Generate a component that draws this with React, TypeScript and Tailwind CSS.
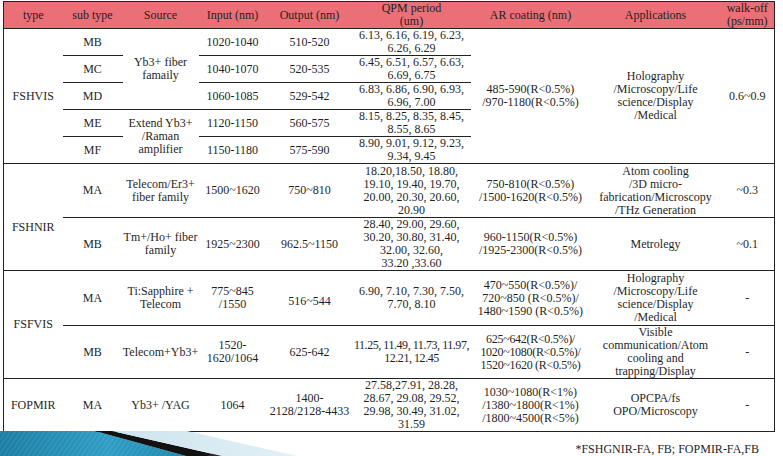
import React from "react";

// Crystal specification table (slide-style), with the decorative swoosh bottom-left.

type Cell = {
	text: React.ReactNode;
	rowSpan?: number;
	className?: string;
};

type Row = { h: string; cells: Cell[] };

const br = (...lines: string[]) =>
	lines.map((l, i) => (
		<React.Fragment key={i}>
			{i > 0 && <br />}
			{l}
		</React.Fragment>
	));

const holography = br("Holography", "/Microscopy/Life", "science/Display", "/Medical");

const rows: Row[] = [
	{
		h: "h-[26px]",
		cells: [
			{ text: "FSHVIS", rowSpan: 5 },
			{ text: "MB" },
			{ text: br("Yb3+ fiber", "famaily"), rowSpan: 3 },
			{ text: "1020-1040" },
			{ text: "510-520" },
			{ text: br("6.13, 6.16, 6.19, 6.23,", "6.26, 6.29") },
			{ text: br("485-590(R<0.5%)", "/970-1180(R<0.5%)"), rowSpan: 5 },
			{ text: holography, rowSpan: 5 },
			{ text: "0.6~0.9", rowSpan: 5 },
		],
	},
	{
		h: "h-[27px]",
		cells: [
			{ text: "MC" },
			{ text: "1040-1070" },
			{ text: "520-535" },
			{ text: br("6.45, 6.51, 6.57, 6.63,", "6.69, 6.75") },
		],
	},
	{
		h: "h-[27px]",
		cells: [
			{ text: "MD" },
			{ text: "1060-1085" },
			{ text: "529-542" },
			{ text: br("6.83, 6.86, 6.90, 6.93,", "6.96, 7.00") },
		],
	},
	{
		h: "h-[27px]",
		cells: [
			{ text: "ME" },
			{ text: br("Extend Yb3+", "/Raman", "amplifier"), rowSpan: 2 },
			{ text: "1120-1150" },
			{ text: "560-575" },
			{ text: br("8.15, 8.25, 8.35, 8.45,", "8.55, 8.65") },
		],
	},
	{
		h: "h-[27px]",
		cells: [
			{ text: "MF" },
			{ text: "1150-1180" },
			{ text: "575-590" },
			{ text: br("8.90, 9.01, 9.12, 9.23,", "9.34, 9.45") },
		],
	},
	{
		h: "h-[54px]",
		cells: [
			{ text: "FSHNIR", rowSpan: 2, className: "pt-[20px]" },
			{ text: "MA" },
			{ text: br("Telecom/Er3+", "fiber family") },
			{ text: "1500~1620" },
			{ text: "750~810" },
			{
				text: br(
					"18.20,18.50, 18.80,",
					"19.10, 19.40, 19.70,",
					"20.00, 20.30, 20.60,",
					"20.90",
				),
			},
			{ text: br("750-810(R<0.5%)", "/1500-1620(R<0.5%)") },
			{
				text: br(
					"Atom cooling",
					"/3D micro-",
					"fabrication/Microscopy",
					"/THz Generation",
				),
			},
			{ text: "~0.3" },
		],
	},
	{
		h: "h-[52px]",
		cells: [
			{ text: "MB" },
			{ text: br("Tm+/Ho+ fiber", "family") },
			{ text: "1925~2300" },
			{ text: "962.5~1150" },
			{
				text: br(
					"28.40, 29.00, 29.60,",
					"30.20, 30.80, 31.40,",
					"32.00, 32.60,",
					"33.20 ,33.60",
				),
			},
			{ text: br("960-1150(R<0.5%)", "/1925-2300(R<0.5%)") },
			{ text: "Metrolegy" },
			{ text: "~0.1" },
		],
	},
	{
		h: "h-[55px]",
		cells: [
			{ text: "FSFVIS", rowSpan: 2 },
			{ text: "MA" },
			{ text: br("Ti:Sapphire +", "Telecom") },
			{ text: br("775~845", "/1550") },
			{ text: "516~544", className: "pt-[6px]" },
			{ text: br("6.90, 7.10, 7.30, 7.50,", "7.70, 8.10") },
			{
				text: br(
					"470~550(R<0.5%)/",
					"720~850 (R<0.5%)/",
					"1480~1590 (R<0.5%)",
				),
			},
			{ text: holography },
			{ text: "-" },
		],
	},
	{
		h: "h-[52px]",
		cells: [
			{ text: "MB" },
			{ text: "Telecom+Yb3+" },
			{ text: br("1520-", "1620/1064") },
			{ text: "625-642" },
			{
				text: br("11.25, 11.49, 11.73, 11.97,", "12.21, 12.45"),
				className: "tracking-[-0.45px]",
			},
			{
				text: br(
					"625~642(R<0.5%)/",
					"1020~1080(R<0.5%)/",
					"1520~1620 (R<0.5%)",
				),
				className: "tracking-[-0.3px]",
			},
			{
				text: br("Visible", "communication/Atom", "cooling and", "trapping/Display"),
			},
			{ text: "-" },
		],
	},
	{
		h: "h-[53px]",
		cells: [
			{ text: "FOPMIR" },
			{ text: "MA" },
			{ text: "Yb3+ /YAG" },
			{ text: "1064" },
			{ text: br("1400-", "2128/2128-4433") },
			{
				text: br(
					"27.58,27.91, 28.28,",
					"28.67, 29.08, 29.52,",
					"29.98, 30.49, 31.02,",
					"31.59",
				),
			},
			{ text: br("1030~1080(R<1%)", "/1380~1800(R<1%)", "/1800~4500(R<5%)") },
			{ text: br("OPCPA/fs", "OPO/Microscopy") },
			{ text: "-" },
		],
	},
];

const widths = [59, 60, 76, 68, 86, 118, 120, 130, 54];

const headers: React.ReactNode[] = [
	"type",
	"sub type",
	"Source",
	"Input (nm)",
	"Output (nm)",
	br("QPM period", "(um)"),
	"AR coating (nm)",
	"Applications",
	br("walk-off", "(ps/mm)"),
];

function Swoosh() {
	return (
		<svg width="320" height="28" viewBox="0 0 320 28">
			<defs>
				<linearGradient id="blue" x1="0" y1="0" x2="1" y2="0">
					<stop offset="0" stopColor="#1a7ca2" />
					<stop offset="0.55" stopColor="#2c9cc4" />
					<stop offset="1" stopColor="#1883aa" />
				</linearGradient>
				<pattern
					id="stripes"
					width="4"
					height="4"
					patternUnits="userSpaceOnUse"
					patternTransform="rotate(35)"
				>
					<rect width="2" height="4" fill="#ffffff" opacity="0.08" />
				</pattern>
				<linearGradient id="pale" x1="0" y1="0" x2="1" y2="0">
					<stop offset="0" stopColor="#cde4ee" />
					<stop offset="1" stopColor="#e4f1f6" />
				</linearGradient>
			</defs>
			<polygon points="0,0 95,0 197,28 0,28" fill="url(#blue)" />
			<polygon points="0,0 95,0 197,28 0,28" fill="url(#stripes)" />
			<polygon points="95,0 112,0 235,28 197,28" fill="#121212" />
			<polygon points="205,26 212,22 235,28 212,28" fill="#2a2a2a" />
			<polygon points="112,0 187,0 310,28 235,28" fill="url(#pale)" />
		</svg>
	);
}

export default function App() {
	return (
		<div className="h-[456px] w-[783px] overflow-hidden bg-white font-['Liberation_Serif','Times_New_Roman',serif] text-[12px] leading-[13px] text-[#1f1f1f]">
			<table className="ml-[3px] mt-[1px] w-[772px] table-fixed border-collapse border-x border-t border-[#222]">
				<colgroup>
					{widths.map((w, i) => (
						<col key={i} style={{ width: w }} />
					))}
				</colgroup>
				<thead>
					<tr className="h-[27px] bg-[#eb6f77]">
						{headers.map((h, i) => (
							<th
								key={i}
								className="whitespace-nowrap border-b border-[#222] p-0 text-center align-middle font-normal leading-[13px] text-[#222]"
							>
								{h}
							</th>
						))}
					</tr>
				</thead>
				<tbody>
					{rows.map((r, ri) => (
						<tr key={ri} className={r.h}>
							{r.cells.map((c, ci) => (
								<td
									key={ci}
									rowSpan={c.rowSpan}
									className={`whitespace-nowrap border-b border-[#222] p-0 text-center align-middle ${c.className ?? ""}`}
								>
									{c.text}
								</td>
							))}
						</tr>
					))}
				</tbody>
			</table>
			<div className="flex h-[27px] items-end">
				<Swoosh />
				<p className="mb-[3px] ml-auto mr-[24px] text-[12px] leading-[13px] text-[#1f1f1f]">
					*FSHGNIR-FA, FB; FOPMIR-FA,FB
				</p>
			</div>
		</div>
	);
}
